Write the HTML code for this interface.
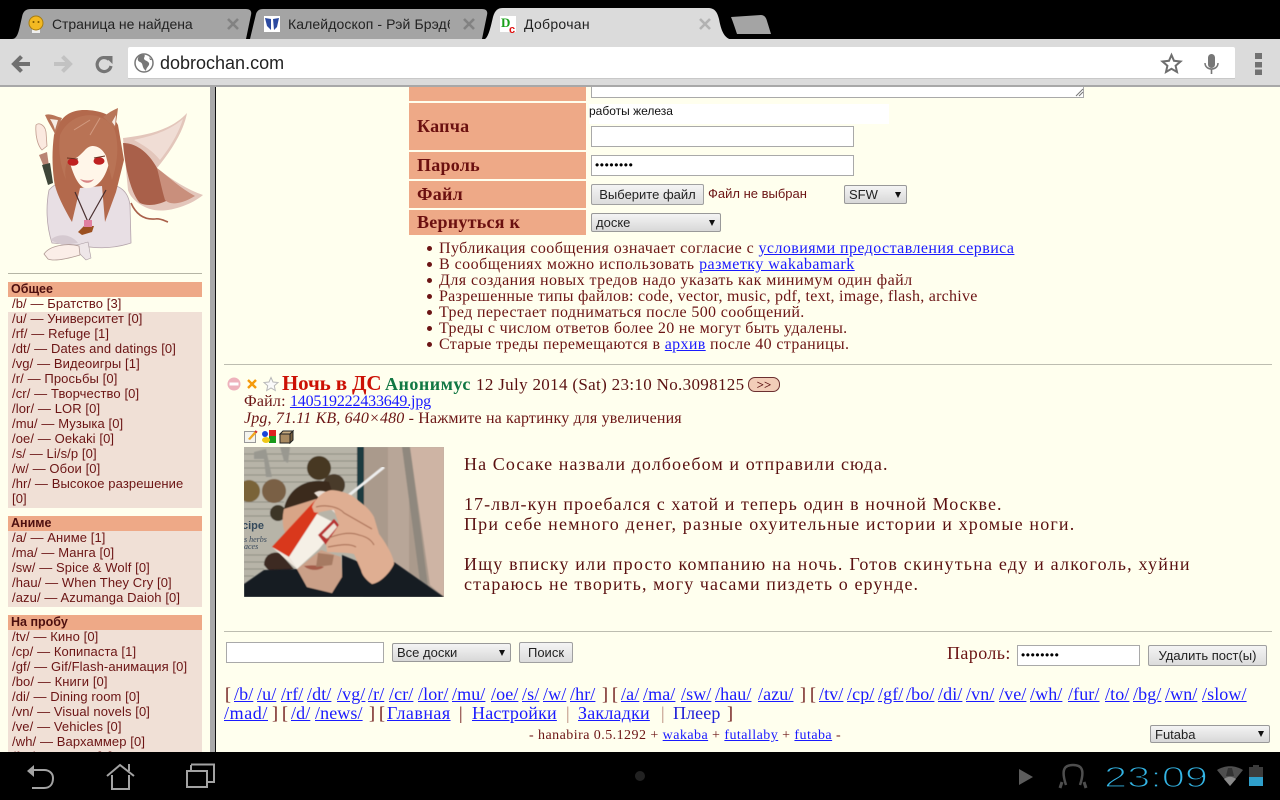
<!DOCTYPE html>
<html lang="ru"><head><meta charset="utf-8"><title>Доброчан</title>
<style>
html,body{margin:0;padding:0;width:1280px;height:800px;overflow:hidden;background:#ffffee}
body{position:relative;font-family:"Liberation Serif","DejaVu Serif",serif;color:#6b1414}
.a{position:absolute}
.t{position:absolute;white-space:nowrap}
a{color:#1a1aff;text-decoration:underline}
.s{font-family:"Liberation Sans",sans-serif}
.inp{position:absolute;box-sizing:border-box;background:#fff;border:1px solid #a9a9a9;font:12px/19px "Liberation Sans",sans-serif;color:#000;padding-left:3px;overflow:hidden}
.btn{position:absolute;box-sizing:border-box;border:1px solid #a0a0a0;border-radius:2px;background:linear-gradient(#f4f4f4,#dcdcdc);font:13px "Liberation Sans",sans-serif;color:#222;white-space:nowrap;display:flex;align-items:center;justify-content:center}
.sel{position:absolute;box-sizing:border-box;border:1px solid #999;border-radius:2px;background:linear-gradient(#f4f4f4,#d8d8d8);font:13px "Liberation Sans",sans-serif;color:#222;white-space:nowrap;padding-left:4px;display:flex;align-items:center}
.sel i{position:absolute;right:5px;top:50%;margin-top:-3px;width:0;height:0;border-left:3.5px solid transparent;border-right:3.5px solid transparent;border-top:6px solid #111}
.lab{position:absolute;left:409px;width:177px;background:#eea987;box-sizing:border-box;padding-left:8px;font-weight:bold;font-size:18px;color:#6b1010;letter-spacing:.25px;display:flex;align-items:center}
.hd{position:absolute;left:8px;width:194px;height:15px;background:#eea987;font:bold 12.5px/15px "Liberation Sans",sans-serif;color:#4d0f0f;padding-left:3px;box-sizing:border-box}
.sb{position:absolute;left:8px;width:194px;background:#f0e0d6}
.it{position:absolute;left:12px;white-space:nowrap;font:13px/15px "Liberation Sans",sans-serif;color:#6b1414;letter-spacing:.1px}
.li{position:absolute;left:439px;white-space:nowrap;font-size:16px;line-height:16px}
.dot{position:absolute;left:427px;width:5px;height:5px;border-radius:50%;background:#6b1414}
.pt{position:absolute;left:464px;white-space:nowrap;font-size:18px;line-height:20px;color:#5a1010}
.r{position:absolute;left:0;width:1280px;height:20px;font-size:18px;line-height:20px;color:#6b1414;letter-spacing:.1px}
.r>*{position:absolute;top:0;white-space:nowrap}
</style></head><body>

<!-- browser chrome -->
<div class="a" style="left:0;top:0;width:1280px;height:87px;background:#000"></div>
<svg class="a" style="left:0;top:0" width="1280" height="87" viewBox="0 0 1280 87">
<path d="M12 39 C18 39 19 30 22 17 C23 11 26 9 31 9 L246 9 C250 9 252 11 251 15 L246 39Z" fill="#a4a4a4"/>
<path d="M250 39 L256 14 C257 11 259 9 263 9 L482 9 C486 9 488 11 487 15 L482 39Z" fill="#a4a4a4"/>
<path d="M731 17 L761 15 C764 15 766 17 767 21 L771 34 L737 34 C735 28 733 22 731 17Z" fill="#a4a4a4"/>
<rect x="0" y="39" width="1280" height="47" fill="#dbdbdb"/>
<path d="M483 40 C488 39 490 30 493 17 C495 10 498 8 503 8 L708 8 C714 8 717 11 719 19 C721 30 724 39 733 40Z" fill="#dbdbdb"/>
<rect x="0" y="85" width="1280" height="2" fill="#a8a8a8"/>
<rect x="128" y="47" width="1107" height="32" rx="2" fill="#fff"/>
<rect x="128" y="78" width="1107" height="1" fill="#c8c8c8"/>
<!-- favicons -->
<rect x="32" y="27" width="8" height="6" fill="#eeeeee"/><circle cx="36" cy="23" r="7" fill="#f3b922" stroke="#a77c10"/><circle cx="33.500" cy="22" r="1" fill="#7a5600"/><circle cx="38.500" cy="22" r="1" fill="#7a5600"/>
<rect x="264" y="16" width="16" height="16" fill="#fff"/><path d="M265 18 L271 19 L271 30 L267 26Z M273 19 L279 18 L277 27 L274 30Z" fill="#2c4aa0"/>
<rect x="500" y="16" width="16" height="16" fill="#fff"/>
<text x="501" y="27" font-family="Liberation Serif" font-weight="bold" font-size="13" fill="#1aa01a">D</text><text x="509" y="33" font-family="Liberation Sans" font-weight="bold" font-size="11" fill="#e01010">c</text>
<!-- close -->
<g stroke-width="2.600" fill="none">
<path d="M228 19 L238 29 M238 19 L228 29" stroke="#828282"/>
<path d="M464 19 L474 29 M474 19 L464 29" stroke="#828282"/>
<path d="M700 19 L710 29 M710 19 L700 29" stroke="#b2b2b2"/>
</g>
<!-- nav -->
<path d="M30 64 H15 M21.500 56.500 L14 64 L21.500 71.500" fill="none" stroke="#707070" stroke-width="4"/>
<path d="M54 64 H69 M62.500 56.500 L70 64 L62.500 71.500" fill="none" stroke="#c2c2c2" stroke-width="4"/>
<path d="M109 59.500 A7 7 0 1 0 111 66" fill="none" stroke="#757575" stroke-width="3.200"/><path d="M104.500 56 L112.500 56 L112.500 64Z" fill="#757575"/>
<circle cx="144" cy="63" r="9" fill="#fff" stroke="#777" stroke-width="1.500"/><path d="M140 55 C137 58 137 61 140 62 C143 63 142 66 144 69 L146 71 C146 67 150 66 149 63 C147 60 144 61 144 58 C145 56 145 55 144 54.500Z M149 57 L152 60 L150 60Z" fill="#777"/>
<!-- star mic menu -->
<path d="M1171.500 55 L1174 60.800 L1180.500 61.500 L1175.600 65.700 L1177 72 L1171.500 68.800 L1166 72 L1167.400 65.700 L1162.500 61.500 L1169 60.800Z" fill="none" stroke="#6e6e6e" stroke-width="2"/>
<rect x="1208" y="54" width="7" height="14" rx="3.500" fill="#777"/><path d="M1205 63 C1205 71 1218 71 1218 63" fill="none" stroke="#777" stroke-width="1.500"/><rect x="1210.700" y="69" width="1.600" height="5" fill="#777"/>
<rect x="1255" y="53" width="7" height="6" fill="#727272"/><rect x="1255" y="62" width="7" height="5.500" fill="#727272"/><rect x="1255" y="69.500" width="7" height="5.500" fill="#727272"/>
</svg>
<div class="t s" style="left:52px;top:16px;font-size:14px;line-height:17px;color:#222;letter-spacing:-.05px">Страница не найдена</div>
<div class="t s" style="left:288px;top:16px;width:162px;overflow:hidden;font-size:14px;line-height:17px;color:#222;letter-spacing:.1px">Калейдоскоп - Рэй Брэдбери</div>
<div class="t s" style="left:524px;top:16px;font-size:14px;line-height:17px;color:#222;letter-spacing:.3px">Доброчан</div>
<div class="t s" style="left:160px;top:53px;font-size:18px;line-height:21px;color:#222">dobrochan.com</div>

<!-- sidebar illustration -->
<svg class="a" style="left:30px;top:95px" width="185" height="175" viewBox="30 95 185 175">
<g stroke-linejoin="round">
<!-- tail -->
<path d="M123 138 C140 136 170 132 187 113 C184 130 172 150 157 168 C172 180 188 190 203 195 C190 206 165 214 150 209 C138 205 130 197 128 190Z" fill="#e3c6bb"/>
<path d="M123 143 C138 143 150 155 157 168 C162 178 165 185 172 198 C160 205 148 207 140 203 C132 195 125 170 123 143Z" fill="#a9604a"/>
<path d="M157 168 C170 178 180 188 195 196 C180 205 170 205 165 200 C162 190 160 180 157 168Z" fill="#c98f7c"/>
<path d="M134 140 C145 137 165 134 183 119 C178 135 168 150 160 160 C152 150 143 145 134 140Z" fill="#f0ddd5"/>
<path d="M131 203 C135 212 142 220 155 219 C160 218 165 221 168 222" fill="none" stroke="#a9604a" stroke-width="1.600"/>
<!-- arm up -->
<path d="M36 125 C39 122 45 125 46 132 L47 146 L42 150 C38 146 35 136 36 125Z" fill="#fbe9df" stroke="#c09a8c" stroke-width=".8"/>
<path d="M39 155 L47 152 L49 166 L44 167Z" fill="#b98574"/>
<path d="M42 165 L50 163 L53 183 L48 185Z" fill="#3e4638"/>
<!-- shirt -->
<path d="M49 190 C56 182 66 180 74 184 L108 184 C118 185 128 190 130 205 L131 243 C110 250 92 248 77 245 L52 243 C46 225 46 205 49 190Z" fill="#e8dfe4" stroke="#b5a5ac" stroke-width=".8"/>
<path d="M50 240 C60 232 72 235 78 243 L62 245Z" fill="#d5c9d0"/>
<path d="M77 245 L88 242 L91 258 L86 260 L79 253Z" fill="#eee6e8" stroke="#a89aa0" stroke-width=".6"/>
<path d="M44 254 C50 245 68 243 79 246 L80 255 C70 258 55 262 48 259Z" fill="#fbeee8" stroke="#b09a94" stroke-width=".8"/>
<!-- hair back -->
<path d="M54 135 C60 115 72 110 84 110 C100 110 113 115 118 125 L124 160 L116 192 L105 222 L102 186 L80 188 L72 222 C62 205 55 190 54 180 C52 165 52 150 54 135Z" fill="#b3694c"/>
<!-- face -->
<path d="M67 150 C72 176 80 190 88 188 C100 188 110 172 111 148 L95 138 L78 140Z" fill="#fff6e9"/>
<!-- bangs -->
<path d="M60 135 C70 112 100 108 114 128 C120 145 117 165 112 180 L106 156 C102 147 92 142 85 150 C80 155 76 160 72 158 C66 160 64 170 66 180 C60 165 58 150 60 135Z" fill="#b97355"/>
<path d="M74 130 L90 120 M90 135 L100 118" stroke="#d29a80" stroke-width="1" fill="none"/>
<!-- ears -->
<path d="M45 115 C50 113 55 116 62 118 L55 134 C52 128 48 122 45 115Z" fill="#b87558"/>
<path d="M118 108 C117 116 116 124 115 128 L103 117 C108 113 113 110 118 108Z" fill="#b87558"/>
<path d="M50 119 C52 122 54 126 55 130 L58 120Z" fill="#f6ece4"/>
<path d="M116 115 L112 122 L115 126Z" fill="#f6ece4"/>
<!-- eyes, mouth -->
<ellipse cx="73" cy="162" rx="5.500" ry="3.800" fill="#bf2020"/><ellipse cx="99" cy="161" rx="5.500" ry="3.800" fill="#bf2020"/>
<path d="M67 158 L78 159 M94 158 L105 156" stroke="#6a3020" stroke-width="1"/>
<path d="M80 179 C85 181 91 181 94 179 C91 184 84 184 80 179Z" fill="#d88484"/>
<!-- necklace -->
<path d="M75 192 L88 222 L106 190" fill="none" stroke="#4a3030" stroke-width="1.200"/>
<path d="M84 226 L94 226 L92 232 L82 235 L78 232Z" fill="#9c5020"/><rect x="84" y="220" width="8" height="7" fill="#e080a0"/>
</g>
</svg>
<div class="a" style="left:8px;top:273px;width:194px;height:1px;background:#b5b5a5"></div>

<div class="hd" style="top:282px">Общее</div>
<div class="sb" style="top:297px;height:211px"></div>
<div class="a" style="left:8px;top:297px;width:194px;height:15px;background:#ffffee"></div>
<div class="it" style="top:296px">/b/ — Братство [3]</div>
<div class="it" style="top:311px">/u/ — Университет [0]</div>
<div class="it" style="top:326px">/rf/ — Refuge [1]</div>
<div class="it" style="top:341px">/dt/ — Dates and datings [0]</div>
<div class="it" style="top:356px">/vg/ — Видеоигры [1]</div>
<div class="it" style="top:371px">/r/ — Просьбы [0]</div>
<div class="it" style="top:386px">/cr/ — Творчество [0]</div>
<div class="it" style="top:401px">/lor/ — LOR [0]</div>
<div class="it" style="top:416px">/mu/ — Музыка [0]</div>
<div class="it" style="top:431px">/oe/ — Oekaki [0]</div>
<div class="it" style="top:446px">/s/ — Li/s/p [0]</div>
<div class="it" style="top:461px">/w/ — Обои [0]</div>
<div class="it" style="top:476px">/hr/ — Высокое разрешение</div>
<div class="it" style="top:491px">[0]</div>

<div class="hd" style="top:516px">Аниме</div>
<div class="sb" style="top:531px;height:76px"></div>
<div class="it" style="top:530px">/a/ — Аниме [1]</div>
<div class="it" style="top:545px">/ma/ — Манга [0]</div>
<div class="it" style="top:560px">/sw/ — Spice &amp; Wolf [0]</div>
<div class="it" style="top:575px">/hau/ — When They Cry [0]</div>
<div class="it" style="top:590px">/azu/ — Azumanga Daioh [0]</div>

<div class="hd" style="top:615px">На пробу</div>
<div class="sb" style="top:630px;height:130px"></div>
<div class="it" style="top:629px">/tv/ — Кино [0]</div>
<div class="it" style="top:644px">/cp/ — Копипаста [1]</div>
<div class="it" style="top:659px">/gf/ — Gif/Flash-анимация [0]</div>
<div class="it" style="top:674px">/bo/ — Книги [0]</div>
<div class="it" style="top:689px">/di/ — Dining room [0]</div>
<div class="it" style="top:704px">/vn/ — Visual novels [0]</div>
<div class="it" style="top:719px">/ve/ — Vehicles [0]</div>
<div class="it" style="top:734px">/wh/ — Вархаммер [0]</div>
<div class="it" style="top:749px">/fur/ — Фурри [0]</div>

<div class="a" style="left:210px;top:87px;width:5px;height:665px;background:#a9a9a9"></div>
<div class="a" style="left:215px;top:87px;width:1px;height:665px;background:#111"></div>

<!-- form -->
<div class="lab" style="top:87px;height:14px"></div>
<div class="inp" style="left:591px;top:87px;width:493px;height:11px;border-top:0"></div>
<svg class="a" style="left:1075px;top:88px" width="9" height="9"><path d="M1 8 L8 1 M4 8 L8 4" stroke="#777" stroke-width="1"/></svg>
<div class="lab" style="top:103px;height:47px">Капча</div>
<div class="a" style="left:589px;top:104px;width:300px;height:20px;background:#fff"></div>
<div class="t s" style="left:589px;top:104px;font-size:12px;line-height:15px;color:#111">работы железа</div>
<div class="inp" style="left:591px;top:126px;width:263px;height:21px"></div>
<div class="lab" style="top:152px;height:27px">Пароль</div>
<div class="inp" style="left:591px;top:155px;width:263px;height:21px;letter-spacing:.6px">••••••••</div>
<div class="lab" style="top:181px;height:27px">Файл</div>
<div class="btn" style="left:591px;top:184px;width:113px;height:21px">Выберите файл</div>
<div class="t s" style="left:708px;top:186px;font-size:13px;line-height:16px;color:#6b1414">Файл не выбран</div>
<div class="sel" style="left:844px;top:185px;width:63px;height:19px">SFW<i></i></div>
<div class="lab" style="top:210px;height:25px">Вернуться к</div>
<div class="sel" style="left:591px;top:213px;width:130px;height:19px">доске<i></i></div>

<i class="dot" style="top:246px"></i><div class="li" style="top:241px;letter-spacing:.42px">Публикация сообщения означает согласие с <a href="#">условиями предоставления сервиса</a></div>
<i class="dot" style="top:262px"></i><div class="li" style="top:257px;letter-spacing:.47px">В сообщениях можно использовать <a href="#">разметку wakabamark</a></div>
<i class="dot" style="top:278px"></i><div class="li" style="top:273px;letter-spacing:.45px">Для создания новых тредов надо указать как минимум один файл</div>
<i class="dot" style="top:294px"></i><div class="li" style="top:289px;letter-spacing:.25px">Разрешенные типы файлов: code, vector, music, pdf, text, image, flash, archive</div>
<i class="dot" style="top:310px"></i><div class="li" style="top:305px;letter-spacing:.35px">Тред перестает подниматься после 500 сообщений.</div>
<i class="dot" style="top:326px"></i><div class="li" style="top:321px;letter-spacing:.33px">Треды с числом ответов более 20 не могут быть удалены.</div>
<i class="dot" style="top:342px"></i><div class="li" style="top:337px;letter-spacing:.35px">Старые треды перемещаются в <a href="#">архив</a> после 40 страницы.</div>

<div class="a" style="left:224px;top:364px;width:1048px;height:1px;background:#bdbdb0"></div>

<!-- post -->
<svg class="a" style="left:226px;top:376px" width="56" height="16" viewBox="0 0 56 16">
<circle cx="8" cy="8" r="6.500" fill="#eeb2bc"/><rect x="3.500" y="6.500" width="9" height="3" fill="#fff"/>
<path d="M22 4 L30 12 M30 4 L22 12" stroke="#f59a0c" stroke-width="2.400"/>
<path d="M45 1.500 L47 6 L52 6.500 L48.300 9.800 L49.300 14.500 L45 12 L40.700 14.500 L41.700 9.800 L38 6.500 L43 6Z" fill="#fafafa" stroke="#b8b8b8"/>
</svg>
<div class="t" style="left:282px;top:371px;font-size:21px;line-height:25px;font-weight:bold;color:#cc1105;letter-spacing:-.15px">Ночь в ДС</div>
<div class="t" style="left:385px;top:374px;font-size:18px;line-height:20px;font-weight:bold;color:#117743;letter-spacing:.5px">Анонимус</div>
<div class="t" style="left:476px;top:375px;font-size:17px;line-height:20px;letter-spacing:.33px;color:#5a1010">12 July 2014 (Sat) 23:10 No.3098125</div>
<div class="a" style="left:748px;top:377px;width:32px;height:15px;box-sizing:border-box;border:1px solid #6b3030;border-radius:7px;background:#f2cdb8;font:bold 13px/13px 'Liberation Serif',serif;text-align:center;color:#5a1010">&gt;&gt;</div>
<div class="t" style="left:244px;top:393px;font-size:16px;line-height:18px;letter-spacing:.2px">Файл: <a href="#" style="letter-spacing:-.18px">140519222433649.jpg</a></div>
<div class="t" style="left:244px;top:410px;font-size:16px;line-height:18px;letter-spacing:.15px"><i>Jpg, 71.11 KB, 640×480</i> - Нажмите на картинку для увеличения</div>
<svg class="a" style="left:244px;top:429px" width="50" height="15" viewBox="0 0 50 15">
<rect x=".5" y="2.500" width="11" height="11" fill="#f4f4ee" stroke="#999"/><path d="M4 10 L11 2 L13 3.500 L6 11Z" fill="#f0a820"/><path d="M11 2 L13 3.500" stroke="#d03030" stroke-width="2"/>
<rect x="18" y="2" width="14" height="13" fill="#fff"/><circle cx="21" cy="5" r="3" fill="#1a44d8"/><rect x="25" y="1" width="7" height="6" fill="#e02020"/><rect x="25" y="7" width="7" height="7" fill="#1a9a1a"/><ellipse cx="22" cy="11" rx="4" ry="3" fill="#f0c818"/>
<path d="M36 5 L46 5 L46 14 L36 14Z" fill="#a88a60" stroke="#222"/><path d="M36 5 L39 2 L49 2 L46 5Z" fill="#c8ac80" stroke="#222"/><path d="M46 5 L49 2 L49 11 L46 14Z" fill="#786040" stroke="#222"/>
</svg>

<svg class="a" style="left:244px;top:447px" width="200" height="150" viewBox="0 0 200 150">
<defs><filter id="b" x="0" y="0" width="100%" height="100%"><feGaussianBlur stdDeviation=".6"/></filter></defs>
<rect width="200" height="150" fill="#b5b2a6"/>
<g filter="url(#b)">
<rect x="0" y="0" width="114" height="150" fill="#b7b4a8"/>
<g stroke="#8e8d83" stroke-width="1"><path d="M0 7H114M0 14H114M0 21H114M0 28H114M0 35H114M0 55H40M0 62H34M0 69H34M0 108H30M0 115H25M0 122H20M0 129H10"/></g>
<path d="M10 5 L22 2 L28 30 L22 30 L20 12 L10 12Z M36 0 L46 0 L44 16 L40 14Z" fill="#999890"/>
<rect x="119" y="0" width="81" height="150" fill="#aa9a8c"/>
<rect x="144" y="0" width="21" height="150" fill="#b8a698"/>
<path d="M158 0 L166 0 L184 140 L176 135Z" fill="#8f887e"/>
<path d="M166 0 L200 0 L200 150 L186 138Z" fill="#ceb4a4"/>
<rect x="113" y="0" width="7" height="60" fill="#1e3a40"/>
<circle cx="75" cy="21" r="12" fill="#463822"/><circle cx="5" cy="44" r="11" fill="#7a6438"/><circle cx="30" cy="44" r="12" fill="#7a6044"/><circle cx="90" cy="38" r="11" fill="#4a3a2c"/><circle cx="34" cy="66" r="8" fill="#3c3428"/>
<path d="M20 118 C20 108 28 104 36 106 L50 122 L30 130Z" fill="#3c2c24"/>
<path d="M40 62 C44 40 65 30 85 35 L90 50 L60 62 L42 70Z" fill="#3a2a1e"/>
<path d="M40 62 L72 52 L76 72 L42 88 C38 80 38 70 40 62Z" fill="#d8a587"/>
</g>
<text x="-2" y="82" font-family="Liberation Sans" font-weight="bold" font-size="11" fill="#354a5c">cipe</text>
<text x="0" y="95" font-family="Liberation Serif" font-style="italic" font-size="8" fill="#3a4a5c">s herbs</text>
<text x="0" y="102" font-family="Liberation Serif" font-style="italic" font-size="8" fill="#3a4a5c">aces</text>
<g filter="url(#b)">
<path d="M104 49 L140 20" stroke="#eeeeee" stroke-width="3"/>
<path d="M0 137 L20 123 L53 122 L63 140 L88 146 L98 128 L98 108 L115 115 L128 137 L150 115 L197 148 L200 150 L0 150Z" fill="#141a24"/>
<path d="M53 122 L77 103 L97 110 L98 130 L88 146 L63 140Z" fill="#cba088"/>
<path d="M60 119 C67 118 75 118 80 120 C75 124 65 124 60 119Z" fill="#a55c4a"/>
<path d="M72 120 L74 106 L90 108 L88 118Z" fill="#a67a62"/>
<path d="M28 100 L78 46 L84 50 L73 67 L45 110Z" fill="#d9391f"/>
<path d="M45 110 L73 67 L95 78 L75 102 L53 122Z" fill="#f5f0e6"/>
<path d="M28 100 L45 110 L53 122Z" fill="#f0e8de"/>
<path d="M70 46 C78 40 88 46 107 62 L95 70 L76 52Z" fill="#eadfd6"/>
<path d="M74 88 L90 72 L95 78 L82 98Z" fill="#b83030"/>
<path d="M78 88 L90 76 L93 80 L83 92Z" fill="#efe4d8"/>
<path d="M68 60 C72 50 80 44 87 43 C95 43 102 46 107 48 C118 56 126 62 130 70 L135 87 C142 96 150 110 150 117 C146 126 136 136 128 137 C122 133 118 128 117 123 L110 107 C100 105 92 106 83 105 L82 97 L95 78 L90 63 C85 62 74 67 70 65Z" fill="#dfae92"/>
<path d="M72 60 C82 57 95 60 100 66 L128 82 M82 92 C92 88 104 84 115 88 C124 90 128 94 130 98 M84 100 C95 98 105 96 112 100" stroke="#a86e54" stroke-width="1.100" fill="none"/>
</g>
</svg>

<div class="pt" style="top:454px;letter-spacing:1.08px">На Сосаке назвали долбоебом и отправили сюда.</div>
<div class="pt" style="top:494px;letter-spacing:1.05px">17-лвл-кун проебался с хатой и теперь один в ночной Москве.</div>
<div class="pt" style="top:514px;letter-spacing:1.16px">При себе немного денег, разные охуительные истории и хромые ноги.</div>
<div class="pt" style="top:554px;letter-spacing:1.2px">Ищу вписку или просто компанию на ночь. Готов скинутьна еду и алкоголь, хуйни</div>
<div class="pt" style="top:574px;letter-spacing:1.09px">стараюсь не творить, могу часами пиздеть о ерунде.</div>

<div class="a" style="left:224px;top:631px;width:1048px;height:1px;background:#bdbdb0"></div>
<div class="inp" style="left:226px;top:642px;width:158px;height:21px"></div>
<div class="sel" style="left:392px;top:643px;width:119px;height:19px">Все доски<i></i></div>
<div class="btn" style="left:519px;top:642px;width:54px;height:21px">Поиск</div>
<div class="t" style="left:947px;top:643px;font-size:18px;line-height:20px;letter-spacing:.4px">Пароль:</div>
<div class="inp" style="left:1017px;top:645px;width:123px;height:21px;letter-spacing:.6px">••••••••</div>
<div class="btn" style="left:1148px;top:645px;width:119px;height:21px">Удалить пост(ы)</div>

<div class="r" style="top:684px">
<span style="left:225px">[</span><a href="#" style="left:234px">/b/</a><a href="#" style="left:257px">/u/</a><a href="#" style="left:281px">/rf/</a><a href="#" style="left:307px">/dt/</a><a href="#" style="left:337px">/vg/</a><a href="#" style="left:368px">/r/</a><a href="#" style="left:389px">/cr/</a><a href="#" style="left:418px">/lor/</a><a href="#" style="left:452px">/mu/</a><a href="#" style="left:491px">/oe/</a><a href="#" style="left:522px">/s/</a><a href="#" style="left:543px">/w/</a><a href="#" style="left:570px">/hr/</a><span style="left:602px">]</span><span style="left:612px">[</span><a href="#" style="left:621px">/a/</a><a href="#" style="left:643px">/ma/</a><a href="#" style="left:681px">/sw/</a><a href="#" style="left:715px">/hau/</a><a href="#" style="left:758px">/azu/</a><span style="left:800px">]</span><span style="left:810px">[</span><a href="#" style="left:819px">/tv/</a><a href="#" style="left:847px">/cp/</a><a href="#" style="left:878px">/gf/</a><a href="#" style="left:906px">/bo/</a><a href="#" style="left:938px">/di/</a><a href="#" style="left:966px">/vn/</a><a href="#" style="left:999px">/ve/</a><a href="#" style="left:1030px">/wh/</a><a href="#" style="left:1068px">/fur/</a><a href="#" style="left:1105px">/to/</a><a href="#" style="left:1133px">/bg/</a><a href="#" style="left:1165px">/wn/</a><a href="#" style="left:1202px">/slow/</a>
</div>
<div class="r" style="top:703px">
<a href="#" style="left:224px;letter-spacing:.6px">/mad/</a><span style="left:272px">]</span><span style="left:282px">[</span><a href="#" style="left:291px">/d/</a><a href="#" style="left:315px">/news/</a><span style="left:369px">]</span><span style="left:379px">[</span><a href="#" style="left:387px;letter-spacing:.45px">Главная</a><span style="left:459px">|</span><a href="#" style="left:472px;letter-spacing:.2px">Настройки</a><span style="left:566px;color:#b98a7a">|</span><a href="#" style="left:578px;letter-spacing:.2px">Закладки</a><span style="left:661px;color:#b98a7a">|</span><span style="left:673px;color:#2020d8;letter-spacing:.1px">Плеер</span><span style="left:727px">]</span>
</div>
<div class="t" style="left:529px;top:728px;font-size:14px;line-height:16px;letter-spacing:.45px">- hanabira 0.5.1292 + <a href="#">wakaba</a> + <a href="#">futallaby</a> + <a href="#">futaba</a> -</div>
<div class="sel" style="left:1150px;top:725px;width:120px;height:18px">Futaba<i></i></div>

<!-- android bar -->
<div class="a" style="left:0;top:752px;width:1280px;height:48px;background:#000"></div>
<svg class="a" style="left:0;top:752px" width="1280" height="48" viewBox="0 752 1280 48">
<g fill="none" stroke="#a3a3a3" stroke-width="2">
<path d="M32 770 L44 770 C50 770 53 774 53 778 C53 784 50 788 44 788 L32 788"/>
<path d="M107 776 L120 765 L134 776"/>
<path d="M112 775 L112 789 L129 789 L129 775"/>
<path d="M129 764 L129 771"/>
<rect x="187" y="771" width="20" height="16"/>
<path d="M191 764.500 L214 764.500 L214 782 L208 782 M191 765 L191 770"/>
</g>
<path d="M27 771 L34 765 L34 777Z" fill="#a3a3a3"/>
<circle cx="640" cy="776" r="5" fill="#222"/>
<path d="M1019 769 L1033 777 L1019 785Z" fill="#5c5c5c"/>
<path d="M1066 785 C1061 770 1064 765 1073 765 C1082 765 1085 770 1080 785" fill="none" stroke="#4e4e4e" stroke-width="2.500"/>
<path d="M1062 782 L1060 788 M1084 782 L1086 788" stroke="#4e4e4e" stroke-width="3"/>
<text x="1104" y="787" font-family="Liberation Sans" font-size="29" textLength="104" lengthAdjust="spacingAndGlyphs" fill="#33b5e5" stroke="#000" stroke-width="1.200">23:09</text>
<path d="M1217 770 C1225 765 1235 765 1243 770 L1230 786Z" fill="#4f4f4f"/>
<path d="M1224 779 C1228 776 1232 776 1236 779 L1230 786Z" fill="#8a8a8a"/>
<path d="M1228 768 L1232 768 L1234 776 L1226 776Z" fill="#333"/>
<rect x="1253" y="765" width="6" height="3" fill="#3c3c3c"/>
<rect x="1249" y="767" width="14" height="10" fill="#3c3c3c"/>
<rect x="1249" y="777" width="14" height="9" fill="#2f9fcb"/>
</svg>
</body></html>
